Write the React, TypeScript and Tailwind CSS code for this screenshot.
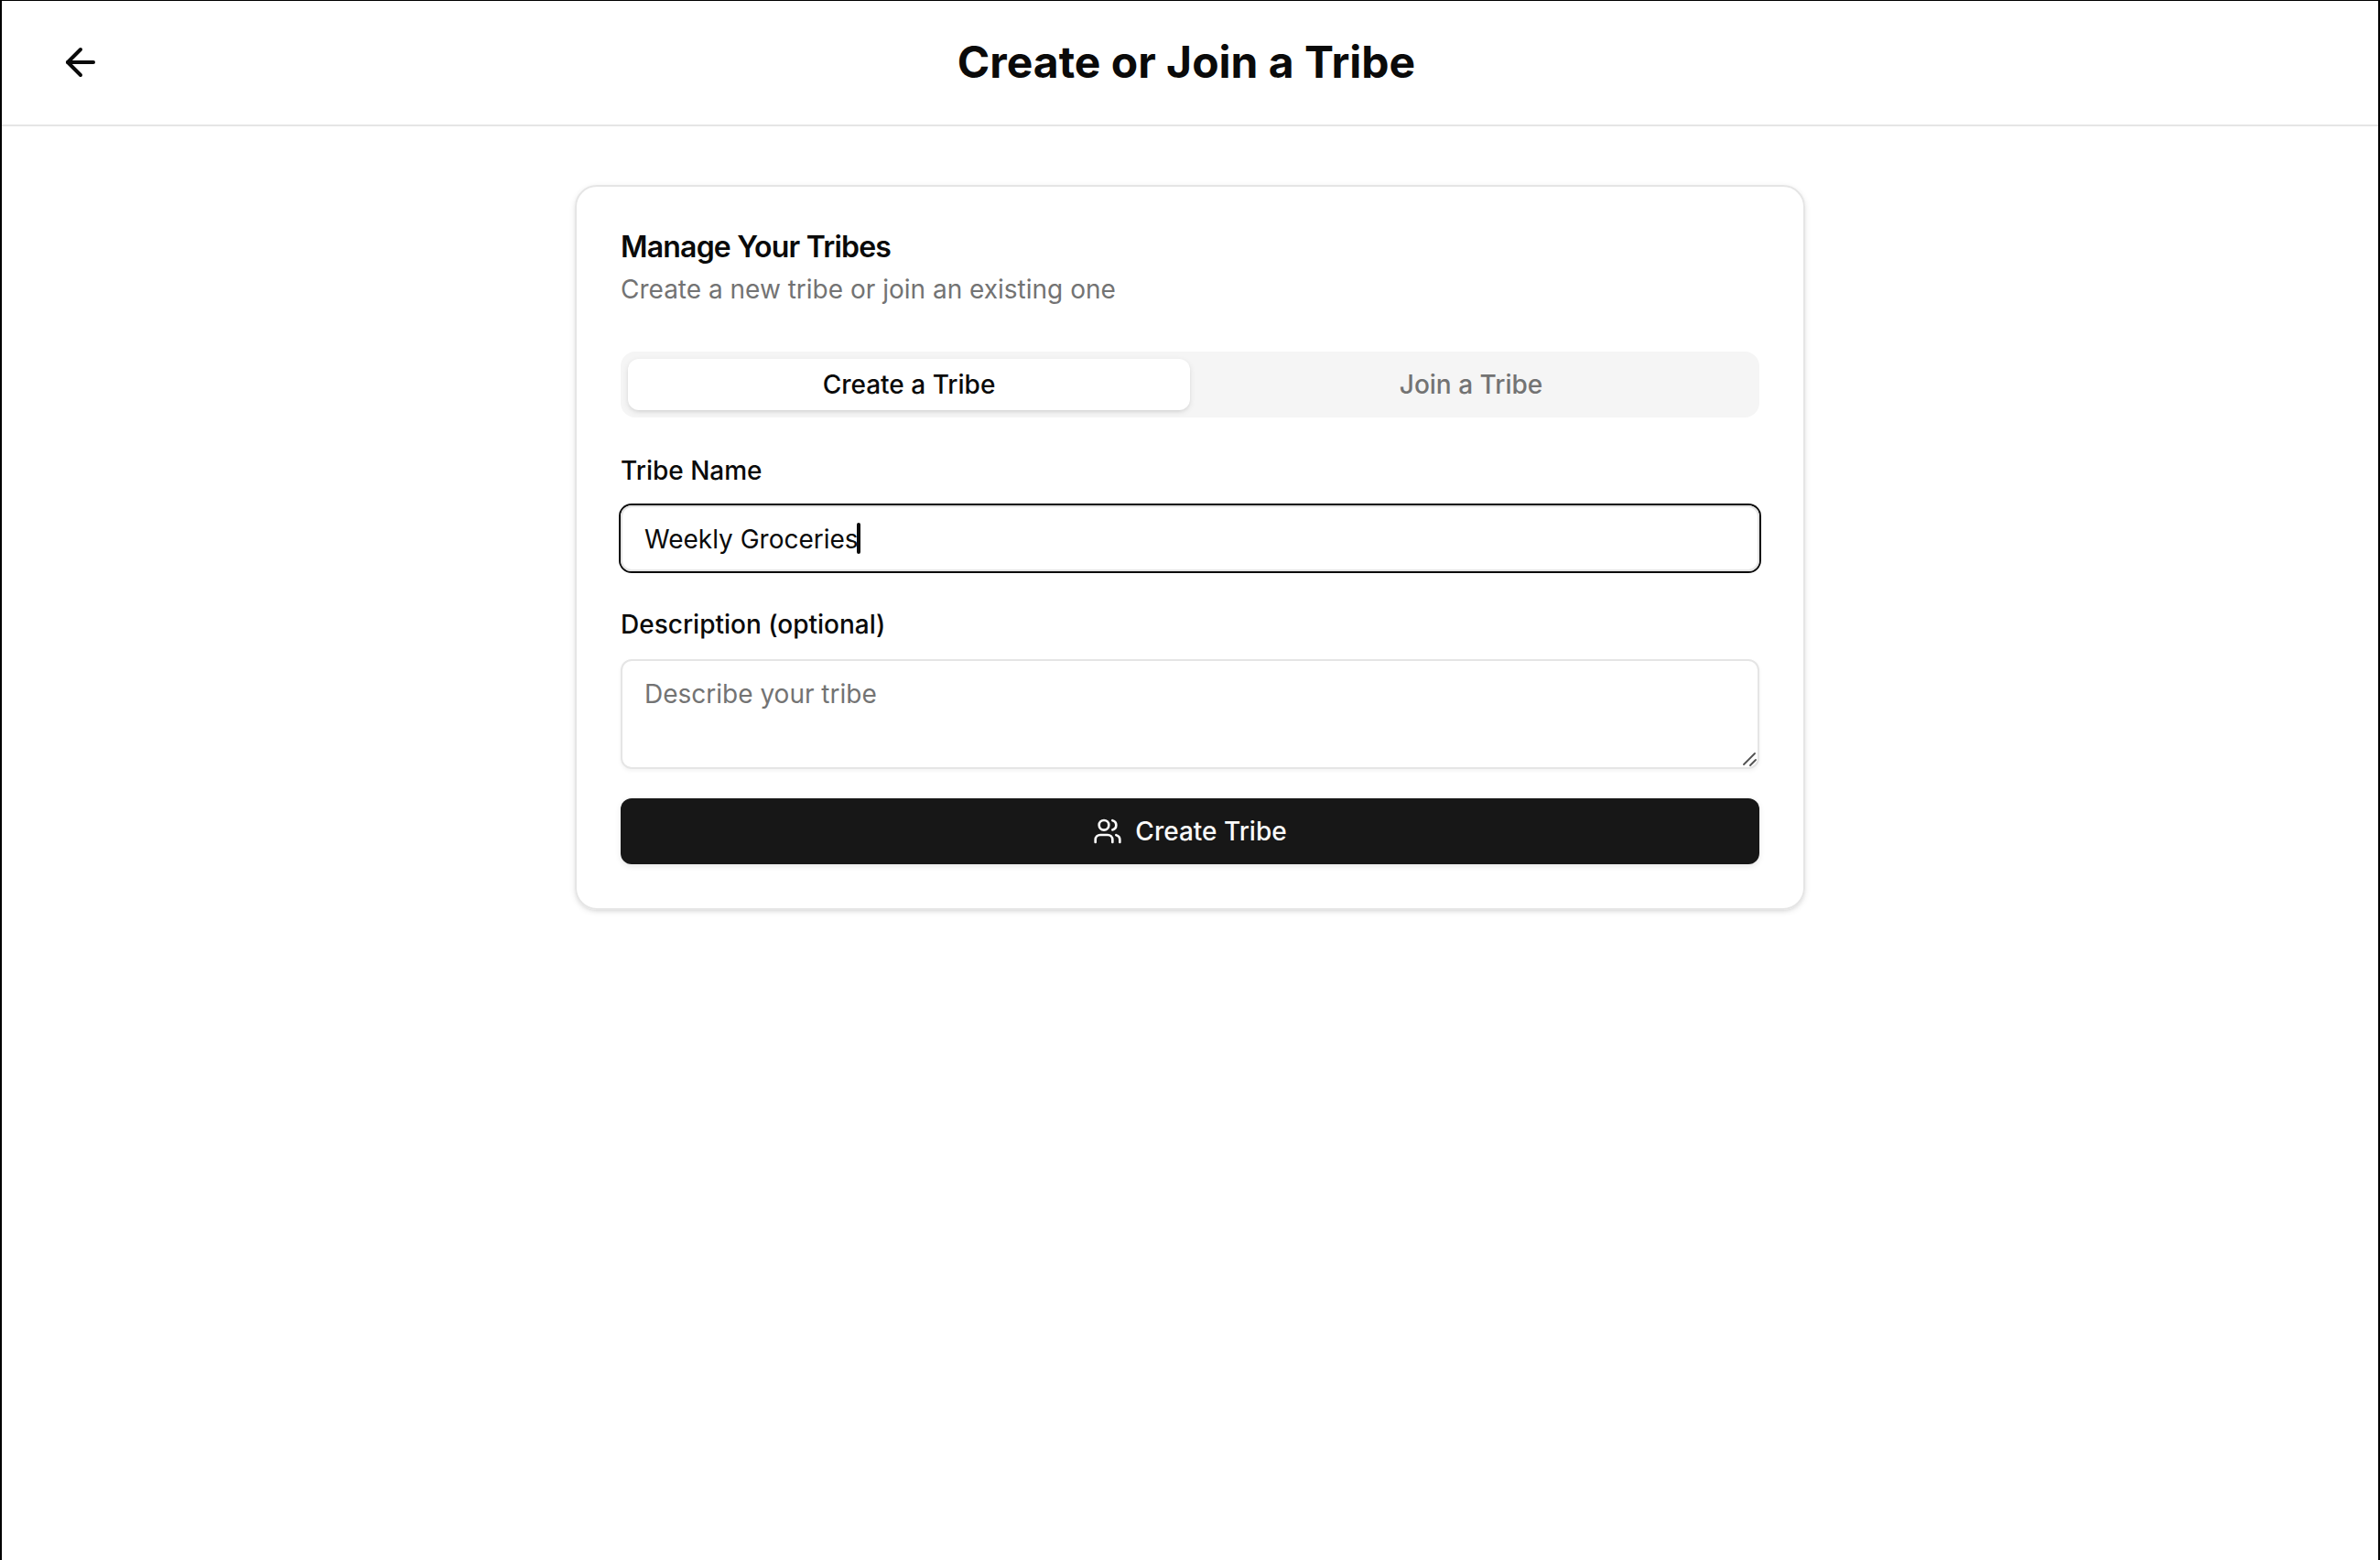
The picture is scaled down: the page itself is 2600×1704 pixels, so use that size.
import { useState } from 'react';
import type { FormEvent } from 'react';
import { ArrowLeft, Users } from 'lucide-react';

type Tab = 'create' | 'join';

const tabs: { id: Tab; label: string }[] = [
  { id: 'create', label: 'Create a Tribe' },
  { id: 'join', label: 'Join a Tribe' },
];

const labelClasses = 'block text-[28px] leading-[52px] font-medium';
const fieldClasses =
  'block w-full rounded-xl border-2 border-neutral-200 px-6 text-[28px] leading-[40px] placeholder:text-neutral-500 outline-none';
const submitClasses =
  'flex h-18 w-full items-center justify-center gap-3.5 rounded-xl bg-neutral-900 text-[28px] leading-[40px] font-medium text-neutral-50 shadow-[0_2px_6px_rgba(0,0,0,0.1)]';

function PageHeader() {
  return (
    <header className="flex h-[137px] items-center justify-between border-b-2 border-neutral-200 px-8 pb-0.5">
      <button type="button" aria-label="Go back" className="flex h-18 w-27 items-center justify-center rounded-xl">
        <ArrowLeft className="size-12" />
      </button>
      <h1 className="text-[48px] leading-[64px] font-bold">Create or Join a Tribe</h1>
      <div className="w-29" />
    </header>
  );
}

function CreateForm() {
  const [name, setName] = useState('Weekly Groceries');
  const [description, setDescription] = useState('');

  const handleSubmit = (event: FormEvent) => event.preventDefault();

  return (
    <form onSubmit={handleSubmit} className="mt-8 flex flex-col gap-8">
      <div className="flex flex-col gap-3">
        <label htmlFor="tribe-name" className={labelClasses}>
          Tribe Name
        </label>
        <div className="relative">
          <input
            id="tribe-name"
            type="text"
            value={name}
            onChange={(e) => setName(e.target.value)}
            className={`${fieldClasses} h-18 pt-0.5 shadow-[0_0_0_2px_#0a0a0a]`}
          />
          {/* Text cursor */}
          <span className="absolute top-[19px] left-[258px] h-[34px] w-1 rounded-sm bg-neutral-950" />
        </div>
      </div>

      <div className="flex flex-col gap-3">
        <label htmlFor="tribe-description" className={labelClasses}>
          Description (optional)
        </label>
        <div className="relative">
          <textarea
            id="tribe-description"
            placeholder="Describe your tribe"
            value={description}
            onChange={(e) => setDescription(e.target.value)}
            className={`${fieldClasses} h-30 resize-none py-4 shadow-[0_2px_4px_rgba(0,0,0,0.05)]`}
          />
          {/* Resize grip */}
          <svg
            className="absolute right-[3px] bottom-[3px] size-4 text-neutral-600"
            viewBox="0 0 16 16"
            fill="none"
            stroke="currentColor"
            strokeWidth="1.8"
            strokeLinecap="round"
          >
            <path d="M2 14 14 2M9 15l6-6" />
          </svg>
        </div>
      </div>

      <button type="submit" className={submitClasses}>
        <Users className="size-8" />
        Create Tribe
      </button>
    </form>
  );
}

function JoinForm() {
  const [code, setCode] = useState('');

  const handleSubmit = (event: FormEvent) => event.preventDefault();

  return (
    <form onSubmit={handleSubmit} className="mt-8 flex flex-col gap-8">
      <div className="flex flex-col gap-3">
        <label htmlFor="invite-code" className={labelClasses}>
          Invite Code
        </label>
        <input
          id="invite-code"
          type="text"
          value={code}
          onChange={(e) => setCode(e.target.value)}
          className={`${fieldClasses} h-18`}
        />
      </div>
      <button type="submit" className={submitClasses}>
        Join Tribe
      </button>
    </form>
  );
}

export default function App() {
  const [activeTab, setActiveTab] = useState<Tab>('create');

  return (
    <div className="min-h-screen border-x-2 border-t border-black bg-white font-['Inter',sans-serif] text-neutral-950">
      <PageHeader />

      <main className="px-8 py-16">
        <section className="mx-auto max-w-[1344px] rounded-3xl border-2 border-neutral-200 p-12 shadow-[0_2px_6px_rgba(0,0,0,0.1),0_2px_4px_-2px_rgba(0,0,0,0.1)]">
          <h2 className="text-[32px] leading-[36px] font-semibold tracking-tight">Manage Your Tribes</h2>
          <p className="mt-2 text-[28px] leading-[40px] text-neutral-500">
            Create a new tribe or join an existing one
          </p>

          <div role="tablist" className="mt-12 grid h-18 grid-cols-2 rounded-2xl bg-neutral-100 p-2">
            {tabs.map((tab) => (
              <button
                key={tab.id}
                type="button"
                role="tab"
                aria-selected={activeTab === tab.id}
                onClick={() => setActiveTab(tab.id)}
                className={`rounded-xl text-[28px] leading-[40px] font-medium ${
                  activeTab === tab.id
                    ? 'bg-white shadow-[0_2px_6px_rgba(0,0,0,0.1),0_2px_4px_-2px_rgba(0,0,0,0.1)]'
                    : 'text-neutral-500'
                }`}
              >
                {tab.label}
              </button>
            ))}
          </div>

          {activeTab === 'create' ? <CreateForm /> : <JoinForm />}
        </section>
      </main>
    </div>
  );
}
